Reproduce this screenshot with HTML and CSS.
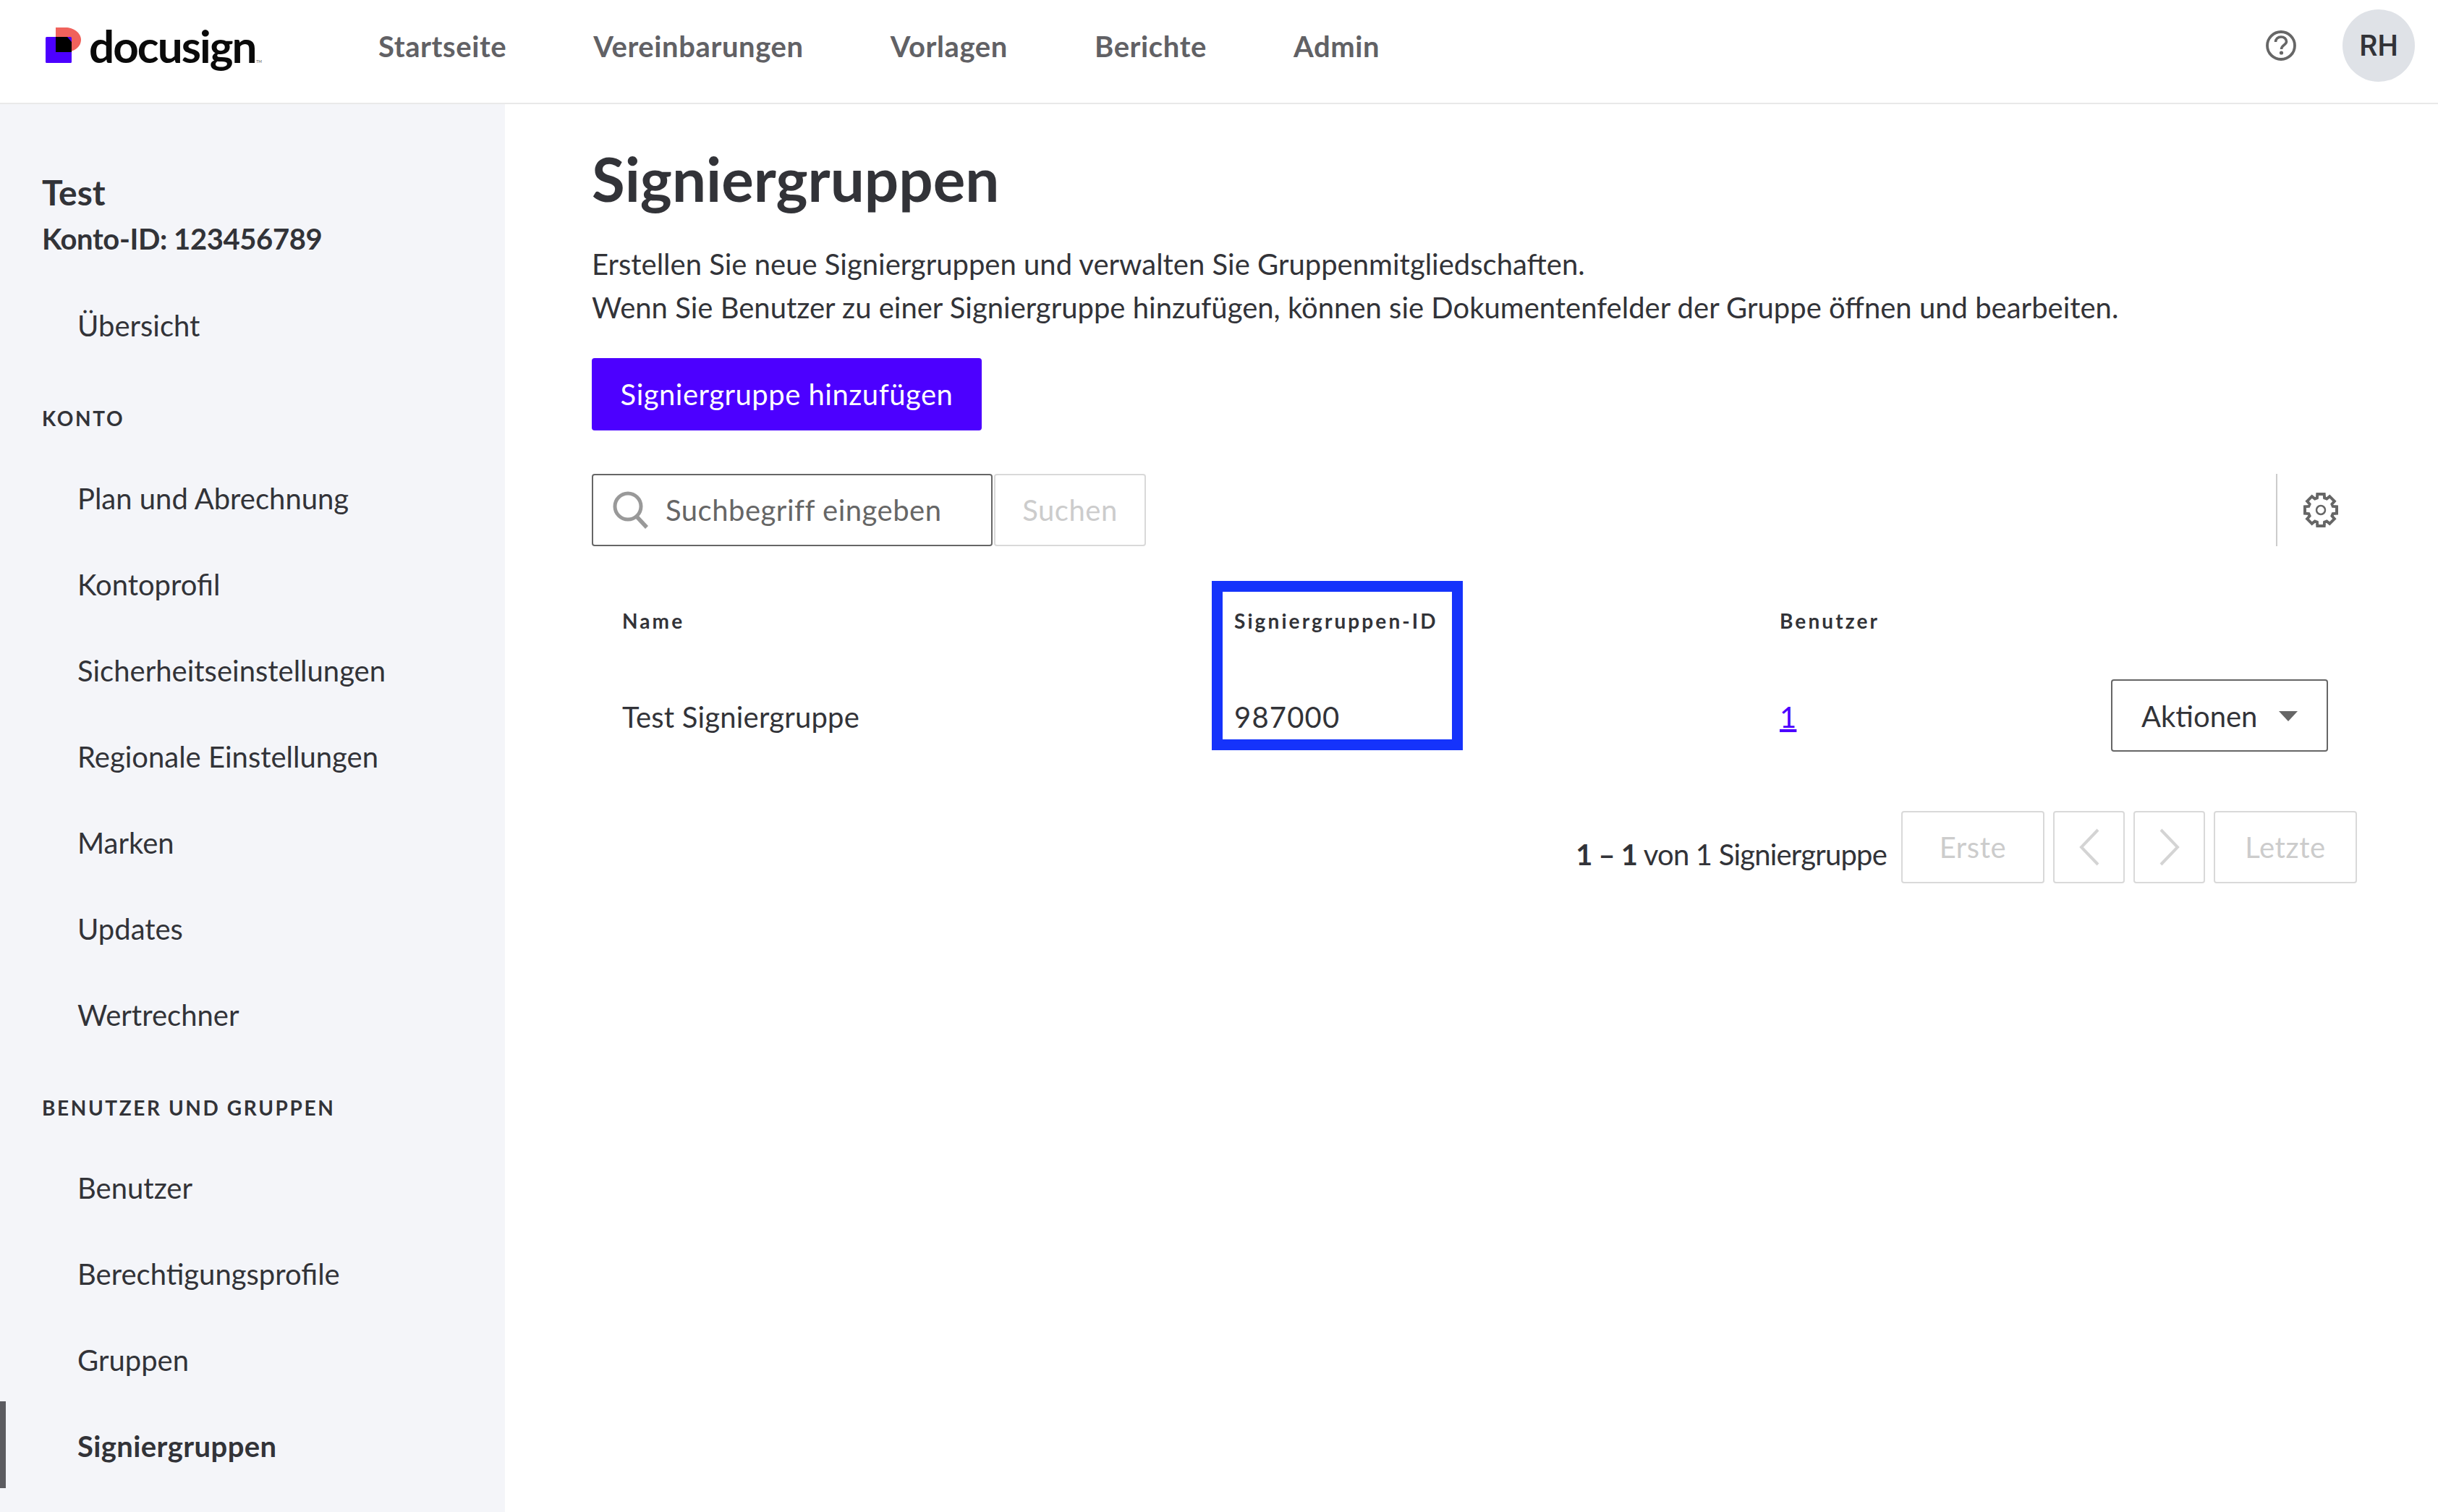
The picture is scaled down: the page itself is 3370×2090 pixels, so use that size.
FILE: index.html
```html
<!DOCTYPE html>
<html lang="de">
<head>
<meta charset="utf-8">
<title>Signiergruppen</title>
<link rel="stylesheet" href="styles.css">
</head>
<body>
<header class="topbar">
  <a class="logo">
    <svg class="logo-mark" width="50" height="50" viewBox="0 0 50 50">
      <path d="M14 0h14c10 0 21 7 21 17s-10 17-21 17H14z" fill="#f0625c"/>
      <rect x="0" y="13" width="36" height="36" rx="1.5" fill="#4c00ff"/>
      <path d="M14 13h16l6 7v14H14z" fill="#000"/>
    </svg>
    <span class="logo-word">docusign</span><span class="logo-tm">TM</span>
  </a>
  <nav class="topnav">
    <a>Startseite</a>
    <a>Vereinbarungen</a>
    <a>Vorlagen</a>
    <a>Berichte</a>
    <a>Admin</a>
  </nav>
  <svg class="help" width="42" height="42" viewBox="0 0 42 42">
    <circle cx="21" cy="21" r="19" fill="none" stroke="#666" stroke-width="3.800"/>
    <path d="M13.500 16c0-4 3-7 7.500-7s7.500 3 7.500 6.500c0 4.500-7 5-7 10.500" fill="none" stroke="#666" stroke-width="3.600"/>
    <circle cx="21.500" cy="31" r="2.600" fill="#666"/>
  </svg>
  <div class="avatar">RH</div>
</header>
<div class="layout">
  <aside class="sidebar">
    <div class="account">
      <div class="account-name">Test</div>
      <div class="account-id">Konto-ID: 123456789</div>
    </div>
    <a class="side-item">Übersicht</a>
    <div class="side-label">KONTO</div>
    <a class="side-item">Plan und Abrechnung</a>
    <a class="side-item">Kontoprofil</a>
    <a class="side-item">Sicherheitseinstellungen</a>
    <a class="side-item">Regionale Einstellungen</a>
    <a class="side-item">Marken</a>
    <a class="side-item">Updates</a>
    <a class="side-item">Wertrechner</a>
    <div class="side-label">BENUTZER UND GRUPPEN</div>
    <a class="side-item">Benutzer</a>
    <a class="side-item">Berechtigungsprofile</a>
    <a class="side-item">Gruppen</a>
    <a class="side-item active">Signiergruppen</a>
  </aside>
  <main class="content">
    <h1 class="title">Signiergruppen</h1>
    <p class="intro">Erstellen Sie neue Signiergruppen und verwalten Sie Gruppenmitgliedschaften.<br>Wenn Sie Benutzer zu einer Signiergruppe hinzufügen, können sie Dokumentenfelder der Gruppe öffnen und bearbeiten.</p>
    <button class="primary">Signiergruppe hinzufügen</button>
    <div class="toolbar">
      <div class="search">
        <svg class="search-icon" width="52" height="52" viewBox="0 0 52 52">
          <circle cx="22" cy="21" r="18" fill="none" stroke="#999" stroke-width="5"/>
          <path d="M34 35l14 15" fill="none" stroke="#999" stroke-width="5.500"/>
        </svg>
        <span>Suchbegriff eingeben</span>
      </div>
      <button class="search-btn">Suchen</button>
      <div class="tool-right">
        <svg class="gear" width="50" height="50" viewBox="0 0 50 50">
          <polygon points="20.32,3 29.68,3 30.12,8.27 33.21,9.55 37.26,6.12 43.88,12.74 40.45,16.79 41.73,19.88 47,20.32 47,29.68 41.73,30.12 40.45,33.21 43.88,37.26 37.26,43.88 33.21,40.45 30.12,41.73 29.68,47 20.32,47 19.88,41.73 16.79,40.45 12.74,43.88 6.12,37.26 9.55,33.21 8.27,30.12 3,29.68 3,20.32 8.27,19.88 9.55,16.79 6.12,12.74 12.74,6.12 16.79,9.55 19.88,8.27" fill="none" stroke="#666" stroke-width="4"/>
          <circle cx="25" cy="25" r="6" fill="none" stroke="#666" stroke-width="2.500"/>
        </svg>
      </div>
    </div>
    <div class="table">
      <div class="cell head">Name</div>
      <div class="cell head">Signiergruppen-ID</div>
      <div class="cell head">Benutzer</div>
      <div class="cell head"></div>
      <div class="cell body-cell">Test Signiergruppe</div>
      <div class="cell body-cell num">987000</div>
      <div class="cell body-cell"><a class="link">1</a></div>
      <div class="cell cell-flush">
        <button class="actions">Aktionen<span class="caret"></span></button>
      </div>
      <div class="highlight"></div>
    </div>
    <div class="pager">
      <span class="pager-text"><b>1 – 1</b> von 1 Signiergruppe</span>
      <button class="page-btn wide">Erste</button>
      <button class="page-btn">
        <svg width="32" height="52" viewBox="0 0 32 52"><path d="M28 2L5 26l23 24" fill="none" stroke="#d4d4d4" stroke-width="4"/></svg>
      </button>
      <button class="page-btn">
        <svg width="32" height="52" viewBox="0 0 32 52"><path d="M4 2l23 24L4 50" fill="none" stroke="#d4d4d4" stroke-width="4"/></svg>
      </button>
      <button class="page-btn wide">Letzte</button>
    </div>
  </main>
</div>
</body>
</html>
```
FILE: styles.css
```css
* { box-sizing: border-box; }
html, body { margin: 0; height: 100%; overflow: hidden; }
body {
  font-family: "Lato", "Liberation Sans", sans-serif;
  font-size: 40px;
  color: #323338;
  background: #fff;
}
button { font-family: inherit; }

.topbar {
  height: 144px;
  border-bottom: 2px solid #e9e9e9;
  display: flex;
  align-items: center;
  padding: 0 32px 16px 63px;
}
.logo { display: flex; align-items: baseline; width: 460px; height: 50px; }
.logo-mark { flex: none; align-self: flex-start; }
.logo-word {
  font-size: 62px;
  font-weight: 700;
  color: #0a0a0a;
  letter-spacing: -2px;
  line-height: 50px;
  margin-left: 10px;
}
.logo-tm { font-size: 5px; color: #555; margin-left: 1px; }
.topnav { display: flex; gap: 120px; flex: 1; padding-top: 2px; }
.topnav a { font-size: 40px; font-weight: 700; letter-spacing: 0.6px; color: #616165; }
.help { margin-right: 64px; }
.avatar {
  width: 100px;
  height: 100px;
  border-radius: 50%;
  background: #dfe2e7;
  display: flex;
  align-items: center;
  justify-content: center;
  font-size: 40px;
  font-weight: 500;
  font-family: "Roboto", sans-serif;
  color: #323338;
}

.layout { display: flex; height: 1946px; }
.sidebar { width: 698px; flex: none; background: #f4f5f9; }
.account { padding: 92px 58px 0; height: 246px; }
.account-name { font-size: 48px; font-weight: 700; line-height: 60px; }
.account-id { font-size: 40px; font-weight: 700; letter-spacing: -0.4px; line-height: 60px; margin-top: 4px; }
.side-item {
  display: flex;
  align-items: center;
  height: 119px;
  padding-left: 107px;
  font-size: 40px;
}
.side-item.active {
  font-weight: 700;
  border-left: 8px solid #5b5b60;
  margin-top: -2px;
  height: 120px;
  padding: 3px 0 0 99px;
  letter-spacing: 0.4px;
}
.side-label {
  height: 120px;
  padding: 49px 0 0 58px;
  font-size: 28px;
  line-height: 40px;
  font-weight: 700;
  letter-spacing: 2.6px;
}

.content { flex: 1; padding: 0 112px 0 120px; min-width: 0; }
.title { margin: 0; font-size: 83.5px; font-weight: 700; line-height: 100px; padding-top: 53px; padding-bottom: 2px; }
.intro { margin: 0; padding-top: 36px; font-size: 40px; line-height: 60px; }
.primary {
  display: block;
  margin-top: 40px;
  width: 539px;
  height: 100px;
  background: #4c00ff;
  color: #fff;
  border: 0;
  border-radius: 4px;
  font-size: 40px;
  letter-spacing: 0.5px;
  padding: 0;
}
.toolbar { display: flex; align-items: stretch; height: 100px; margin-top: 60px; }
.search {
  width: 554px;
  border: 2px solid #666;
  border-radius: 4px;
  display: flex;
  align-items: center;
  gap: 22px;
  padding-left: 26px;
  color: #666;
  font-size: 40px;
  letter-spacing: 0.5px;
}
.search-btn {
  margin-left: 2px;
  width: 210px;
  border: 2px solid #d9d9d9;
  border-radius: 4px;
  background: #fff;
  color: #ccc;
  font-size: 40px;
  letter-spacing: 0.5px;
}
.tool-right {
  margin-left: auto;
  width: 112px;
  border-left: 2px solid #ccc;
  display: flex;
  align-items: center;
  padding-left: 35px;
}

.table {
  position: relative;
  display: grid;
  grid-template-columns: 846px 754px 500px 1fr;
  grid-template-rows: 136px 100px;
  margin-top: 48px;
  align-items: center;
}
.cell { padding-left: 42px; }
.cell-flush { padding-left: 0; }
.head { font-size: 28px; font-weight: 700; letter-spacing: 3.1px; padding-bottom: 26px; }
.body-cell { padding-top: 4px; letter-spacing: 0.2px; }
.num { letter-spacing: 1.2px; }
.link { color: #4c00ff; text-decoration: underline; }
.actions {
  width: 300px;
  height: 100px;
  border: 2px solid #666;
  border-radius: 4px;
  background: #fff;
  color: #323338;
  font-size: 40px;
  display: flex;
  align-items: center;
  justify-content: space-between;
  padding: 2px 40px 0;
}
.caret { border-left: 13px solid transparent; border-right: 13px solid transparent; border-top: 14px solid #666; }
.highlight {
  position: absolute;
  left: 857px;
  top: 0;
  width: 347px;
  height: 234px;
  border: 15px solid #1533fb;
}

.pager { display: flex; align-items: stretch; justify-content: flex-end; gap: 12px; margin-top: 82px; height: 100px; }
.pager-text { align-self: center; padding-top: 20px; margin-right: 8px; font-size: 40px; letter-spacing: -0.8px; }
.pager-text b { font-weight: 700; }
.page-btn {
  width: 99px;
  border: 2px solid #d9d9d9;
  border-radius: 4px;
  background: #fff;
  color: #ccc;
  font-size: 40px;
  letter-spacing: 0.6px;
  display: flex;
  align-items: center;
  justify-content: center;
  padding: 0;
}
.page-btn.wide { width: 198px; }
```
